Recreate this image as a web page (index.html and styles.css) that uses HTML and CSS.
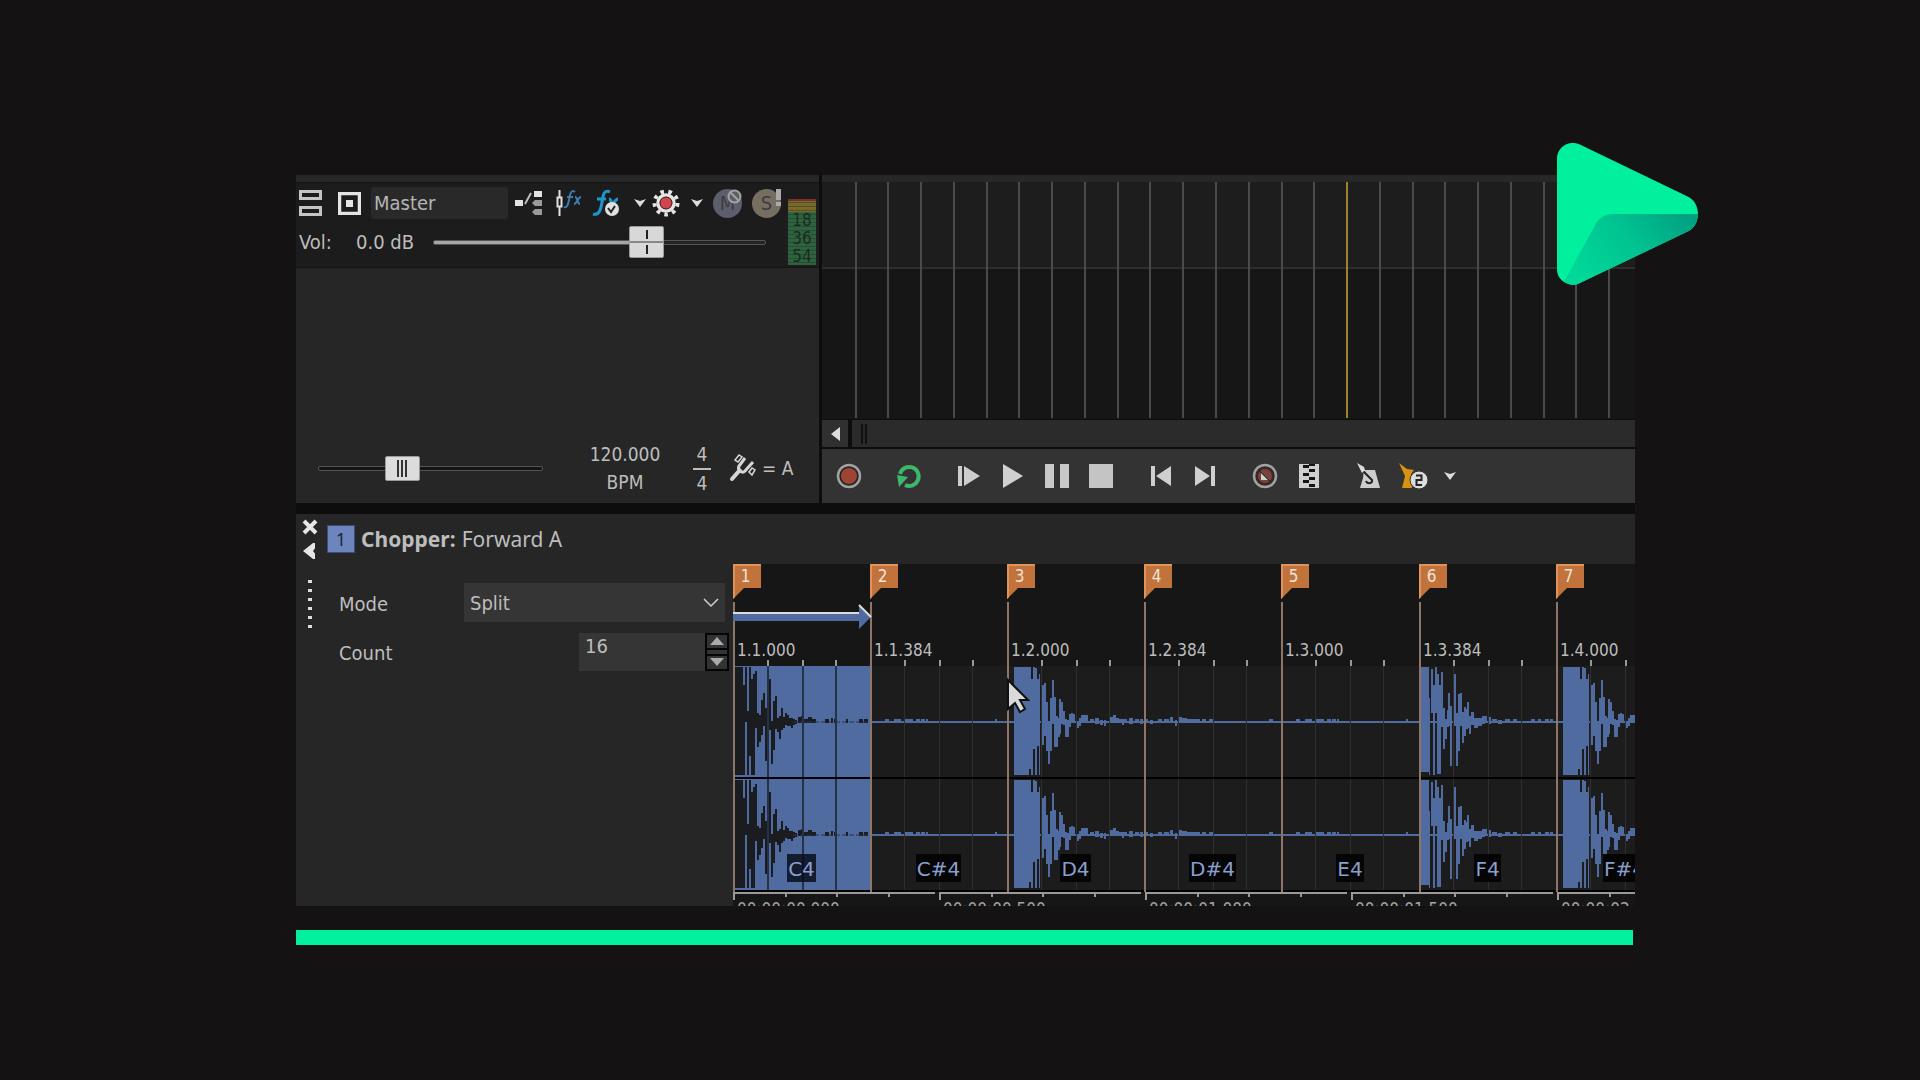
FILE: index.html
```
<!DOCTYPE html>
<html lang="en">
<head>
  <meta charset="UTF-8">
  <meta name="viewport" content="width=device-width, initial-scale=1.0">
  <title>Chopper</title>
  <link rel="stylesheet" href="styles.css">
</head>
<body>

  <main class="stage">
    <div class="app">

      <!-- Master bus -->
      <section class="master">
        <div class="strip"></div>
        <div class="master-head">
          <div class="master-controls">
            <div class="tool-row">
              <button class="icon-btn" aria-label="Minimize track">
                <svg width="23" height="28" viewBox="0 0 23 28" fill="none" stroke="#c4c4c4" stroke-width="3"><path d="M1.500 2.500h20v7h-20zM1.500 18.500h20v7h-20z"/></svg>
              </button>
              <button class="icon-btn" aria-label="Restore track">
                <svg width="23" height="23" viewBox="0 0 23 23"><path d="M1.500 1.500h20v20h-20z" fill="none" stroke="#e4e4e4" stroke-width="3.500"/><path d="M8 8h7v7H8z" fill="#e4e4e4"/></svg>
              </button>
              <input class="name-field" type="text" value="Master" aria-label="Bus name">
              <button class="icon-btn" aria-label="Output routing">
                <svg width="27" height="26" viewBox="0 0 27 26"><path d="M0 10h8v6H0zM19 1h8v6h-8z" fill="#e2e2e2"/><path d="M10 14l6-11" stroke="#bbb" stroke-width="2"/><path d="M17 13l3-3h7v6h-7zM17 22l3-3h7v6h-7z" fill="#9a9a9a"/></svg>
              </button>
              <button class="icon-btn" aria-label="Track FX">
                <svg width="27" height="28" viewBox="0 0 27 28" fill="none"><path d="M3.500 1v26" stroke="#e0e0e0" stroke-width="2"/><path d="M1.500 8.500h4v9h-4z" fill="#1c1c1c" stroke="#e0e0e0" stroke-width="2"/><path d="M19 3c-4-3-5 2-6 8-1 5-2 8-5 7M11 8h6M19 8c3 0 2 7 5 7M25 8c-3 0-4 7-7 7" stroke="#3b7db5" stroke-width="2"/></svg>
              </button>
              <button class="icon-btn" aria-label="Input FX">
                <svg width="28" height="28" viewBox="0 0 28 28" fill="none"><path d="M18 3c-6-3-7 3-8 10-1 7-3 14-9 12M5 10h9M17 10c3 0 2 6 4 7M26 10c-3 0-4 5-8 8" stroke="#1d95cf" stroke-width="3"/><circle cx="20" cy="20" r="7" fill="#e0e0e0"/><path d="M16 19l3 4 4-6" stroke="#222" stroke-width="2"/></svg>
              </button>
              <button class="icon-btn" aria-label="FX menu">
                <svg width="12" height="9" viewBox="0 0 12 9"><path d="M0 0l6 2 6-2-6 8z" fill="#ddd"/></svg>
              </button>
              <button class="icon-btn" aria-label="Automation settings">
                <svg width="28" height="28" viewBox="0 0 28 28"><circle cx="14" cy="14" r="11.500" fill="none" stroke="#e4e4e4" stroke-width="4" stroke-dasharray="3.600 4.430"/><circle cx="14" cy="14" r="8" fill="none" stroke="#e4e4e4" stroke-width="3.500"/><circle cx="14" cy="14" r="6" fill="#d2444b" stroke="#4a2426"/></svg>
              </button>
              <button class="icon-btn" aria-label="Automation menu">
                <svg width="12" height="9" viewBox="0 0 12 9"><path d="M0 0l6 2 6-2-6 8z" fill="#ddd"/></svg>
              </button>
              <button class="icon-btn round mute" aria-label="Mute">M
                <svg class="badge" width="15" height="15" viewBox="0 0 15 15" fill="#5c5f68" stroke="#a3a3a3" stroke-width="2"><circle cx="7.500" cy="7.500" r="6"/><path d="M3.500 3.500l8 8"/></svg>
              </button>
              <button class="icon-btn round solo" aria-label="Solo">S
                <svg class="badge" width="6" height="18" viewBox="0 0 6 18" fill="#aaa"><path d="M1 0h5v11H1zM1 13h5v4H1z"/></svg>
              </button>
            </div>
            <div class="volume-row">
              <label for="volume">Vol:</label>
              <output for="volume">0.0 dB</output>
              <input class="slider volume" id="volume" type="range" min="0" max="100" value="66">
            </div>
          </div>
          <div class="meter"><span>18</span><span>36</span><span>54</span></div>
        </div>

        <div class="master-foot">
          <input class="slider rate" type="range" min="0" max="100" value="35" aria-label="Playback rate">
          <div class="tempo"><span>120.000</span><span>BPM</span></div>
          <div class="meter-sig"><span>4</span><span>4</span></div>
          <div class="pitch">
            <svg width="27" height="29" viewBox="0 0 27 29" fill="none" stroke="#d6d6d6"><path d="M3 25l7-8" stroke-width="4" stroke-linecap="round"/><path d="M16 4l-6 8c-2 4 3 8 6 5l8-9M9 18l3-3" stroke-width="3"/><path d="M6 6l4-5 3 2-4 5zM20 18l3-4 3 2-3 5z" stroke-width="1.500"/></svg>
            <span>= A</span>
          </div>
        </div>
      </section>

      <!-- Arrange view -->
      <section class="arrange">
        <div class="strip"></div>
        <svg class="track-grid" id="track-grid" aria-hidden="true"></svg>
        <div class="scrollbar">
          <button class="scroll-left" aria-label="Scroll left"><svg width="9" height="14" viewBox="0 0 9 14"><path d="M9 0v14L0 7z" fill="#ddd"/></svg></button>
          <div class="scroll-track"><span class="scroll-grip"></span></div>
        </div>
        <div class="transport">
          <button aria-label="Record"><svg width="26" height="26" viewBox="0 0 26 26"><circle cx="13" cy="13" r="11" fill="#292424" stroke="#a2a2a2" stroke-width="2.500"/><circle cx="13" cy="13" r="8" fill="#9c4535"/></svg></button>
          <span class="gap"></span>
          <button aria-label="Loop playback"><svg width="26" height="26" viewBox="0 0 26 26" fill="none"><path d="M4 11a9.500 9.500 0 1 1 5 11" stroke="#3cb76c" stroke-width="4"/><path d="M1 12l11 2-9 10z" fill="#3cb76c"/></svg></button>
          <span class="gap"></span>
          <button aria-label="Play from start"><svg width="22" height="22" viewBox="0 0 22 22" fill="#cdcdcd"><path d="M0 1h4v20H0zM6 1l16 10L6 21z"/></svg></button>
          <button aria-label="Play"><svg width="22" height="26" viewBox="0 0 22 26" fill="#d0d0d0"><path d="M1 1l20 12L1 25z"/></svg></button>
          <button aria-label="Pause"><svg width="24" height="24" viewBox="0 0 24 24" fill="#c8c8c8"><path d="M0 0h9v24H0zM15 0h9v24h-9z"/></svg></button>
          <button aria-label="Stop"><svg width="24" height="24" viewBox="0 0 24 24" fill="#c4c4c4"><path d="M0 0h24v24H0z"/></svg></button>
          <span class="gap"></span>
          <button aria-label="Go to start"><svg width="20" height="20" viewBox="0 0 20 20" fill="#cfcfcf"><path d="M0 0h4v20H0zM20 0v20L5 10z"/></svg></button>
          <button aria-label="Go to end"><svg width="20" height="20" viewBox="0 0 20 20" fill="#cfcfcf"><path d="M16 0h4v20h-4zM0 0l15 10L0 20z"/></svg></button>
          <span class="gap"></span>
          <button aria-label="Automation record"><svg width="26" height="26" viewBox="0 0 26 26"><circle cx="13" cy="13" r="11" fill="#352a29" stroke="#a2a2a2" stroke-width="2.500"/><circle cx="13" cy="13" r="7" fill="#7c4239"/><path d="M9 8v9h9z" fill="#d0d0d0"/><path d="M7 7l12 12" stroke="#2e2523" stroke-width="1.500"/></svg></button>
          <button aria-label="Clip view"><svg width="20" height="24" viewBox="0 0 20 24"><path d="M0 0h20v24H0z" fill="#cfcfcf"/><path d="M4 1h6v3H4zM10 5h6v3h-6zM4 9h6v3H4zM10 13h6v3h-6zM4 16h6v3H4zM10 20h6v3h-6zM10 0h6v2h-6z" fill="#151515"/></svg></button>
          <span class="gap"></span>
          <button aria-label="Metronome"><svg width="24" height="26" viewBox="0 0 24 26"><path d="M7 7h11l5 18H3l3-10z" fill="#cdcdcd"/><path d="M5 7l10 10c1 4-5 4-6 1" fill="none" stroke="#222" stroke-width="2"/><path d="M0 0l7 4 1 3-3 3z" fill="#ddd"/></svg></button>
          <button aria-label="Count-in"><svg width="29" height="26" viewBox="0 0 29 26"><path d="M0 0l8 6 7 1-3 4 1 14H3l3-12z" fill="#d99312"/><circle cx="20" cy="17" r="9" fill="#dcdcdc" stroke="#333"/><path d="M17 12.500h5.500v4.500H17.500v5H23" fill="none" stroke="#222" stroke-width="2"/></svg></button>
          <button class="narrow" aria-label="Metronome menu"><svg width="12" height="9" viewBox="0 0 12 9"><path d="M0 0l6 2 6-2-6 8z" fill="#ddd"/></svg></button>
        </div>
      </section>

      <!-- Chopper -->
      <section class="chopper">
        <div class="dock">
          <button class="icon-btn" aria-label="Close"><svg width="16" height="16" viewBox="0 0 16 16"><path d="M2 2l12 12M14 2L2 14" stroke="#e6e6e6" stroke-width="4"/></svg></button>
          <button class="icon-btn" aria-label="Collapse"><svg width="13" height="16" viewBox="0 0 13 16"><path d="M12 0v16h-2L0 8l10-8z" fill="#e6e6e6"/><path d="M13 4v8l-3-4z" fill="#262626"/></svg></button>
          <span class="grip"></span>
        </div>
        <div class="settings">
          <h2><span class="track-number">1</span><b>Chopper:</b> Forward A</h2>
          <div class="field">
            <label for="mode">Mode</label>
            <div class="select-wrap">
              <select id="mode"><option>Split</option></select>
              <svg width="16" height="10" viewBox="0 0 16 10" fill="none" stroke="#d0d0d0" stroke-width="1.500"><path d="M1 1l7 7 7-7"/></svg>
            </div>
          </div>
          <div class="field">
            <label for="count">Count</label>
            <div class="stepper">
              <input id="count" type="text" value="16">
              <div class="spin">
                <button aria-label="More"><svg width="14" height="8" viewBox="0 0 14 8"><path d="M7 0l7 8H0z" fill="#aaa"/></svg></button>
                <span></span>
                <button aria-label="Fewer"><svg width="14" height="8" viewBox="0 0 14 8"><path d="M0 0h14L7 8z" fill="#aaa"/></svg></button>
              </div>
            </div>
          </div>
        </div>
        <div class="timeline">
          <svg class="wave" id="wave" aria-hidden="true"></svg>
          <div class="slices" id="slices"></div>
          <div class="ruler" id="ruler"></div>
          <svg class="cursor" width="24" height="36" viewBox="0 0 24 36"><path d="M2 2v29l7-6 5 9 5-3-5-9h8z" fill="#dadada" stroke="#111" stroke-width="2"/></svg>
        </div>
      </section>

      <svg class="logo" width="141" height="142" viewBox="0 0 423 426">
        <defs>
          <linearGradient id="fold" x1="0" y1="0.600" x2="1" y2="0.200">
            <stop offset="0" stop-color="#00d898"/>
            <stop offset="0.500" stop-color="#00c391"/>
            <stop offset="1" stop-color="#00a181"/>
          </linearGradient>
        </defs>
        <path d="M0 46C0 12 37-10 67 4L395 162C432 182 432 244 395 264L67 421C37 434 0 412 0 380Z" fill="#00f09d"/>
        <path d="M165 213H423C423 235 413 254 395 264L67 421C50 430 30 425 22 414L118 240C130 222 148 213 165 213Z" fill="url(#fold)"/>
      </svg>
    </div>

    <div class="accent-bar"></div>
  </main>

  <script src="app.js"></script>
</body>
</html>
```
FILE: styles.css
```
/* General styling */
* {
  box-sizing: border-box;
}

body {
  margin: 0;
  background-color: #141213;
  color: #bdbdbd;
  font-family: 'DejaVu Sans Condensed', 'DejaVu Sans', sans-serif;
  font-size: 20px;
  line-height: 24px;
}

button {
  padding: 0;
  border: none;
  background: none;
  color: inherit;
  font: inherit;
  cursor: pointer;
}

svg {
  display: block;
}

.stage {
  padding: 175px 285px 24px 296px;
}

.app {
  position: relative;
  display: grid;
  grid-template-columns: 523px minmax(0, 1fr);
  column-gap: 3px;
  row-gap: 11px;
  background-color: #0d0d0d;
}

.strip {
  height: 7px;
  background-color: #272727;
}

/* Master bus */
.master {
  display: flex;
  flex-direction: column;
  background-color: #262626;
}

.master-head {
  display: flex;
  justify-content: space-between;
  height: 86px;
  padding: 3px 3px 0 3px;
  background-color: #1c1c1c;
  border-top: 1px solid #141414;
  border-bottom: 1px solid #141414;
}

.tool-row {
  display: grid;
  grid-template-columns: 39px 33px 144px 41px 36px 42px 18px 39px 22px 39px 29px;
  align-items: center;
  justify-items: start;
  height: 34px;
}

.icon-btn {
  display: flex;
  align-items: center;
  justify-content: center;
}

.name-field {
  width: 137px;
  height: 32px;
  padding: 0 3px;
  border: none;
  border-radius: 3px;
  background-color: #292929;
  color: #b5b5b5;
  font: inherit;
}

.round {
  position: relative;
  width: 29px;
  height: 29px;
  border-radius: 50%;
  color: #3d3d42;
}

.mute {
  background-color: #5c5f6b;
}

.solo {
  background-color: #776e62;
}

.badge {
  position: absolute;
  top: 0;
  right: 0;
}

.volume-row {
  display: flex;
  align-items: center;
  height: 44px;
}

.volume-row label {
  width: 57px;
}

.volume-row output {
  width: 77px;
}

.meter {
  display: flex;
  flex-direction: column;
  justify-content: flex-end;
  width: 28px;
  height: 66px;
  margin-top: 13px;
  background: repeating-linear-gradient(transparent 0 3px, rgba(20, 50, 30, 0.4) 3px 4px),
    linear-gradient(#7a3030 0 2px, #7b692c 2px 13px, #2f6340 13px);
  color: #1b2b20;
  font-size: 17px;
  line-height: 18px;
  text-align: center;
}

/* Sliders */
.slider {
  appearance: none;
  height: 32px;
  margin: 0;
  background: none;
}

.slider::-webkit-slider-runnable-track {
  height: 5px;
  border: 1px solid #555;
  border-radius: 2px;
  background-color: #151515;
}

.slider::-webkit-slider-thumb {
  appearance: none;
  width: 35px;
  border: 1px solid #999;
  border-radius: 2px;
}

.volume {
  width: 333px;
}

.volume::-webkit-slider-runnable-track {
  background: linear-gradient(to right, #a5a5a5 60%, #242424 60%);
}

.volume::-webkit-slider-thumb {
  height: 32px;
  margin-top: -15px;
  background: linear-gradient(#888, #888) center / 100% 2px no-repeat,
    linear-gradient(transparent 3px, #222 3px 12px, transparent 12px 18px, #222 18px 27px, transparent 27px) center / 2px 100% no-repeat,
    #d8d8d8;
}

.rate {
  width: 225px;
}

.rate::-webkit-slider-thumb {
  height: 25px;
  margin-top: -11px;
  background: repeating-linear-gradient(to right, #333 0 2px, transparent 2px 4px) center / 10px 17px no-repeat, #dcdcdc;
}

/* Tempo */
.master-foot {
  display: flex;
  align-items: center;
  margin-top: auto;
  padding: 0 22px 7px;
  font-size: 19px;
  line-height: 28px;
}

.tempo {
  display: flex;
  flex-direction: column;
  width: 72px;
  margin-left: 46px;
  text-align: center;
}

.meter-sig {
  display: flex;
  flex-direction: column;
  width: 18px;
  margin: 0 18px 0 32px;
  text-align: center;
}

.meter-sig span + span {
  border-top: 2px solid #bdbdbd;
  line-height: 26px;
}

.pitch {
  display: flex;
  flex: none;
  align-items: center;
  gap: 6px;
  white-space: nowrap;
}

/* Arrange view */
.arrange {
  display: flex;
  flex-direction: column;
}

.track-grid {
  width: 100%;
  height: 237px;
  background-color: #161616;
}

.scrollbar {
  display: flex;
  gap: 4px;
  height: 30px;
  padding: 1px 0 2px;
}

.scroll-left {
  display: flex;
  align-items: center;
  justify-content: center;
  width: 26px;
  background-color: #303030;
}

.scroll-track {
  flex: 1;
  padding: 4px 9px;
  background-color: #2b2b2b;
}

.scroll-grip {
  display: block;
  width: 6px;
  height: 20px;
  border: solid #111;
  border-width: 0 2px;
}

.transport {
  display: flex;
  height: 54px;
  padding-left: 5px;
  background-color: #333;
}

.transport button {
  display: flex;
  align-items: center;
  justify-content: center;
  width: 44px;
}

.transport .narrow {
  width: 30px;
}

.gap {
  width: 16px;
}

/* Chopper panel */
.chopper {
  grid-column: 1 / -1;
  display: flex;
  background-color: #262626;
}

.dock {
  display: flex;
  flex-direction: column;
  align-items: center;
  gap: 8px;
  width: 27px;
  padding-top: 5px;
}

.grip {
  width: 4px;
  height: 52px;
  margin-top: 10px;
  background: radial-gradient(circle, #ddd 2px, transparent 2px) 0 0 / 4px 9px;
}

.settings {
  display: flex;
  flex-direction: column;
  gap: 10px;
  width: 410px;
  padding: 10px 4px 0 4px;
}

h2 {
  display: flex;
  align-items: center;
  gap: 6px;
  height: 30px;
  margin: 0 0 19px;
  font-family: 'Noto Sans', 'Open Sans', sans-serif;
  font-size: 21px;
  font-weight: normal;
}

.track-number {
  width: 28px;
  height: 28px;
  background-color: #6c86bd;
  border: 1px solid #3d4f78;
  color: #1c2436;
  font-size: 18px;
  line-height: 26px;
  text-align: center;
}

.field {
  display: flex;
  align-items: center;
  justify-content: space-between;
  height: 39px;
  padding-left: 12px;
}

.field label {
  padding-top: 3px;
}

.select-wrap {
  position: relative;
  width: 261px;
  margin-right: 4px;
}

.select-wrap select {
  appearance: none;
  width: 100%;
  height: 39px;
  padding: 0 6px;
  border: none;
  border-radius: 0;
  background-color: #353535;
  color: #bdbdbd;
  font: inherit;
}

.select-wrap svg {
  position: absolute;
  top: 15px;
  right: 6px;
}

.stepper {
  display: flex;
}

.stepper input {
  width: 126px;
  height: 38px;
  padding: 0 6px 12px;
  border: none;
  background-color: #353535;
  color: #bdbdbd;
  font: inherit;
}

.spin {
  display: grid;
  grid-template-rows: 1fr 4px 1fr;
  gap: 2px;
  width: 24px;
  padding: 2px;
  background-color: #050505;
}

.spin button,
.spin span {
  display: flex;
  align-items: center;
  justify-content: center;
  background-color: #333;
}

/* Timeline */
.timeline {
  position: relative;
  flex: 1;
  min-width: 0;
  margin-top: 50px;
  overflow: hidden;
  background-color: #161616;
  font-size: 17px;
}

.wave {
  position: absolute;
  top: 0;
  left: 0;
  width: 100%;
  height: 100%;
}

.slices {
  position: relative;
  display: flex;
  height: 328px;
}

.slice {
  display: flex;
  flex: none;
  flex-direction: column;
  align-items: flex-start;
}

.flag {
  width: 28px;
  height: 35px;
  padding: 0 3px 11px 0;
  background-color: #c1733b;
  box-shadow: inset 2px 2px #e0935c;
  clip-path: polygon(0 0, 100% 0, 100% 24px, 11px 24px, 0 100%);
  color: #f0e4da;
}

.position {
  margin: 39px 0 0 4px;
}

.note {
  align-self: center;
  margin: auto 0 10px;
  padding: 3px 1px 1px;
  background-color: #050505;
  color: #8b9fce;
  font-family: 'DejaVu Sans', sans-serif;
  font-size: 20px;
}

.slice.selected .note {
  background-color: rgba(5, 10, 20, 0.8);
}

.ruler {
  position: relative;
  display: flex;
  height: 14px;
  overflow: hidden;
}

.ruler span {
  flex: none;
  padding: 5px 0 0 4px;
  color: #a5a5a5;
}

.cursor {
  position: absolute;
  top: 114px;
  left: 273px;
}

.accent-bar {
  height: 15px;
  margin: 24px 2px 0 0;
  background-color: #00f09d;
}

.logo {
  position: absolute;
  top: -32px;
  right: -63px;
}
```
FILE: app.js
```
// Slices: start in px, marker position, note, recorded hit
const slices = [
  { start: 0, position: '1.1.000', note: 'C4', hit: 'kick' },
  { start: 137, position: '1.1.384', note: 'C#4', hit: 'tailA' },
  { start: 274, position: '1.2.000', note: 'D4', hit: 'snare' },
  { start: 411, position: '1.2.384', note: 'D#4', hit: 'tailB' },
  { start: 548, position: '1.3.000', note: 'E4', hit: 'tailA' },
  { start: 686, position: '1.3.384', note: 'F4', hit: 'tom' },
  { start: 823, position: '1.4.000', note: 'F#4', hit: 'snare' },
  { start: 960 }
];

// Peaks: [x, width, up, down]
const hits = {
  kick: [[2, 8, 54, 53], [10, 2, 36, 53], [12, 2, 54, 0], [14, 2, 10, 53], [16, 2, 54, 34], [18, 2, 42, 53], [20, 2, 47, 53],
    [22, 2, 50, 6], [24, 2, 8, 25], [26, 2, 6, 20], [28, 2, 21, 13], [30, 2, 28, 4], [32, 2, 13, 39], [34, 2, 53, 0], [36, 2, 42, 8],
    [38, 2, 0, 42], [40, 2, 20, 28], [42, 2, 25, 7], [44, 2, 3, 10], [46, 2, 5, 17], [48, 2, 13, 8], [50, 2, 4, 6], [52, 2, 8, 3],
    [54, 2, 6, 4], [56, 2, 3, 4], [58, 2, 3, 6], [60, 2, 2, 3], [62, 2, 1, 2], [65, 3, 4, 1], [68, 3, 5, 1], [71, 4, 2, 1],
    [75, 4, 4, 1], [79, 4, 2, 1], [92, 4, 2, 1], [98, 2, 3, 1], [101, 3, 2, 1], [113, 2, 2, 1], [126, 4, 2, 1], [131, 4, 2, 1]],
  snare: [[7, 15, 54, 53], [22, 2, 54, 47], [24, 2, 42, 53], [26, 2, 54, 27], [28, 2, 53, 53], [30, 2, 42, 24], [32, 1, 47, 53],
    [35, 2, 36, 23], [37, 2, 38, 14], [39, 2, 19, 29], [41, 2, 0, 42], [43, 2, 23, 29], [45, 2, 41, 2], [47, 2, 24, 25],
    [49, 2, 5, 25], [51, 2, 3, 15], [52, 2, 22, 12], [54, 2, 19, 2], [56, 2, 10, 3], [58, 2, 2, 15], [60, 2, 1, 15], [62, 2, 7, 5],
    [64, 2, 8, 1], [66, 2, 7, 0], [70, 2, 0, 6], [72, 2, 3, 4], [74, 7, 6, 1], [83, 4, 2, 1], [88, 4, 3, 2], [93, 3, 1, 3],
    [97, 2, 1, 4], [103, 3, 4, 1], [106, 3, 6, 1], [109, 3, 3, 1], [112, 8, 2, 1], [115, 2, 1, 3], [122, 4, 3, 2], [128, 4, 2, 1], [133, 3, 2, 2]],
  tom: [[1, 9, 54, 50], [10, 1, 23, 53], [12, 2, 52, -9], [14, 2, 36, 53], [16, 2, 54, -9], [18, 2, 47, 52], [20, 2, 36, 52],
    [22, 2, 49, 5], [24, 2, 13, 27], [26, 2, 2, 17], [28, 2, 11, 5], [29, 2, 28, 4], [31, 2, 15, 44], [35, 2, 47, 4], [37, 2, 8, 44],
    [39, 2, 27, 29], [41, 2, 28, 4], [43, 2, 9, 21], [45, 2, 14, 14], [47, 2, 12, 7], [48, 2, 19, 6], [50, 2, 5, 12], [52, 3, 9, 3],
    [55, 4, 3, 6], [59, 4, 3, 4], [63, 3, 5, 2], [66, 2, 5, 1], [70, 2, 4, 2], [73, 5, 2, 1], [79, 4, 1, 2], [86, 5, 2, 1],
    [94, 4, 2, 1], [112, 4, 2, 1], [119, 3, 2, 1], [126, 4, 2, 1], [131, 3, 2, 1]],
  tailA: [[15, 4, 2, 0], [24, 7, 2, 1], [35, 8, 2, 0], [46, 4, 2, 0], [51, 4, 2, 0], [56, 2, 2, 0], [125, 2, 2, 0]],
  tailB: [[1, 3, 2, 1], [6, 3, 1, 2], [14, 4, 2, 1], [20, 5, 2, 1], [26, 3, 4, 1], [31, 2, 1, 4], [35, 3, 4, 1], [38, 5, 3, 1],
    [43, 13, 2, 1], [58, 4, 2, 1], [65, 5, 2, 0], [125, 4, 2, 0]]
};

const channels = [157, 270];
const subdivisions = [34, 69, 102];

function rect(x, y, width, height, fill) {
  return `<rect x="${x}" y="${y}" width="${width}" height="${height}" fill="${fill}"/>`;
}

// Waveform with grid, selection and loop arrow
function renderWave() {
  const blue = '#4f6b9f';
  let svg = rect(0, 102, '100%', 226, '#1c1c1c');
  svg += rect(2, 102, 136, 225, blue);

  slices.slice(0, -1).forEach((slice, index) => {
    const color = index === 0 ? '#1a1c20' : blue;
    channels.forEach((center) => {
      if (index > 0) svg += rect(slice.start, center, 138, 2, blue);
      for (const [x, width, up, down] of hits[slice.hit]) {
        svg += rect(slice.start + x, center - up, width, up + down + 1, color);
      }
      if (index === 0) svg += `<path d="M60 ${center + 1}H137" stroke="#2b3446" stroke-width="1" stroke-dasharray="5 2"/>`;
    });
    subdivisions.forEach((x) => {
      svg += rect(slice.start + x, 96, 2, 6, '#999');
      svg += rect(slice.start + x, 102, index === 0 ? 2 : 1, 225, index === 0 ? '#263146' : '#303030');
    });
  });

  svg += rect(0, 213, '100%', 2, '#000');
  svg += rect(0, 326, '100%', 2, '#000');

  slices.slice(0, -1).forEach((slice) => {
    svg += rect(slice.start, 38, 2, 290, '#8f7468');
  });
  svg += rect(0, 48, 128, 2, '#ddd') + rect(0, 50, 128, 7, blue);
  svg += `<path d="M126 41l12 12-12 12z" fill="${blue}"/><path d="M126 41l12 12" stroke="#ddd" stroke-width="2"/>`;

  // Time ruler
  for (let start = 0; start < 1000; start += 206) {
    svg += rect(start, 328, 202, 2, '#999');
    [0, 52, 103, 155].forEach((x) => {
      svg += rect(start + x, 328, 2, x === 0 ? 8 : 5, '#999');
    });
  }
  document.getElementById('wave').innerHTML = svg;
}

function renderSlices() {
  const container = document.getElementById('slices');
  for (let i = 0; i < slices.length - 1; i++) {
    const slice = document.createElement('div');
    slice.className = i === 0 ? 'slice selected' : 'slice';
    slice.style.width = `${slices[i + 1].start - slices[i].start}px`;
    slice.innerHTML = `<button class="flag">${i + 1}</button>
      <span class="position">${slices[i].position}</span>
      <span class="note">${slices[i].note}</span>`;
    container.appendChild(slice);
  }
}

function renderRuler() {
  const ruler = document.getElementById('ruler');
  ['00:00:00.000', '00:00:00.500', '00:00:01.000', '00:00:01.500', '00:00:02.000'].forEach((time) => {
    const label = document.createElement('span');
    label.innerText = time;
    label.style.width = '206px';
    ruler.appendChild(label);
  });
}

// Beat lines of the arrange view
function renderTrackGrid() {
  let svg = rect(0, 0, '100%', 86, '#1d1d1d') + rect(0, 85, '100%', 2, '#2e2e2e');
  for (let i = 0; i < 60; i++) {
    const x = Math.floor(33 + i * 32.77);
    svg += rect(x, 0, 2, 236, i === 15 ? '#9c8428' : '#4a4a4a');
  }
  document.getElementById('track-grid').innerHTML = svg;
}

renderWave();
renderSlices();
renderRuler();
renderTrackGrid();
```
